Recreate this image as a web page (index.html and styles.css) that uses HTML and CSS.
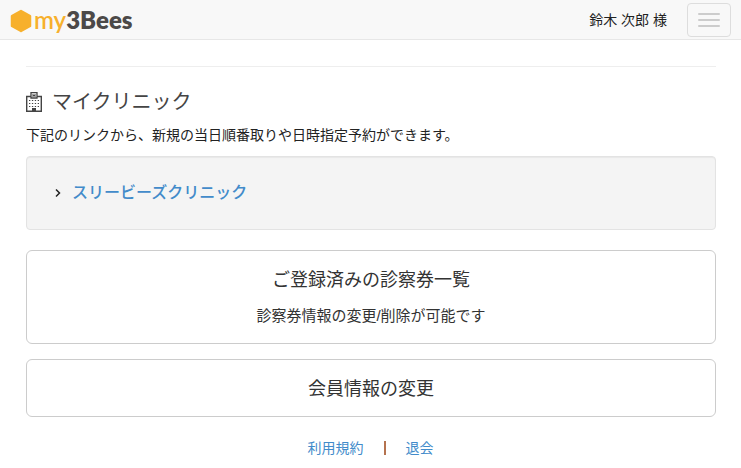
FILE: index.html
```html
<!DOCTYPE html>
<html lang="ja">
<head>
<meta charset="utf-8">
<meta name="viewport" content="width=device-width, initial-scale=1">
<title>my3Bees</title>
<link rel="stylesheet" href="styles.css">
</head>
<body>
<header class="navbar">
  <a class="brand" href="#">
    <svg class="brand-mark" viewBox="0 0 22 24" aria-hidden="true"><path d="M11 2 20 7V17L11 22 2 17V7Z" fill="#f7b02c" stroke="#f7b02c" stroke-width="2.5" stroke-linejoin="round"/></svg>
    <span class="brand-my">my</span><span class="brand-bees">3Bees</span>
  </a>
  <div class="account">
    <span>鈴木 次郎 様</span>
    <button class="menu-toggle" type="button" aria-label="メニュー">
      <span class="bar"></span><span class="bar"></span><span class="bar"></span>
    </button>
  </div>
</header>
<main class="content">
  <section class="clinics">
    <h1 class="heading">
      <svg class="hospital" viewBox="0 0 16 20" aria-hidden="true">
        <path d="M5 4.500H.7V19.300H15.300V4.500H11" fill="none" stroke="#444" stroke-width="1.4"/>
        <path d="M5 .7H11V6H5Z" fill="#fff" stroke="#444" stroke-width="1.3"/>
        <path d="M7 2V5M9 2V5M7 3.500H9" stroke="#444" fill="none"/>
        <path d="M3 8.500H13M3 11.500H13M3 14.500H13" stroke="#444" stroke-width="1.200" stroke-dasharray="1.300 1.600"/>
        <path d="M6 16H10V19H6Z" fill="#444"/>
      </svg>
      マイクリニック
    </h1>
    <p class="lead">下記のリンクから、新規の当日順番取りや日時指定予約ができます。</p>
    <ul class="well">
      <li class="clinic">
        <svg class="chevron" viewBox="0 0 6 10" aria-hidden="true"><path d="M1 1.500 4.500 5 1 8.500" fill="none" stroke="#222" stroke-width="1.500"/></svg>
        <a class="clinic-link" href="#">スリービーズクリニック</a>
      </li>
    </ul>
  </section>
  <nav class="cards">
    <a class="card" href="#">
      <span class="card-title">ご登録済みの診察券一覧</span>
      <span class="card-note">診察券情報の変更/削除が可能です</span>
    </a>
    <a class="card" href="#">
      <span class="card-title">会員情報の変更</span>
    </a>
  </nav>
</main>
<footer class="footer">
  <a href="#">利用規約</a>
  <span class="divider"></span>
  <a href="#">退会</a>
</footer>
</body>
</html>
```
FILE: styles.css
```css
* {
  box-sizing: border-box;
}

body {
  margin: 0;
  background: #fff;
  color: #222;
  font: 14px/20px "Liberation Sans", "Noto Sans CJK JP", sans-serif;
}

a {
  color: #428bca;
  text-decoration: none;
}

.navbar {
  display: flex;
  align-items: center;
  justify-content: space-between;
  height: 40px;
  padding: 0 10px;
  background: #f8f8f8;
  border-bottom: 1px solid #e7e7e7;
}

.brand {
  display: flex;
  align-items: center;
  font: 600 24px/32px Lato, sans-serif;
}

.brand-mark {
  width: 22px;
  height: 24px;
  margin: 3px 2px 0 0;
}

.brand-my {
  color: #f7b02c;
}

.brand-bees {
  color: #4c4948;
  font-weight: 800;
}

.account {
  display: flex;
  align-items: center;
  gap: 20px;
}

.menu-toggle {
  display: flex;
  flex-direction: column;
  align-items: center;
  justify-content: center;
  gap: 4px;
  width: 44px;
  height: 34px;
  padding: 0;
  background: transparent;
  border: 1px solid #ddd;
  border-radius: 4px;
}

.bar {
  width: 22px;
  height: 2px;
  background: #ccc;
  border-radius: 1px;
}

.content {
  margin: 26px 25px 0 26px;
  border-top: 1px solid #eee;
}

.heading {
  display: flex;
  align-items: center;
  gap: 10px;
  margin: 20px 0 8px;
  color: #444;
  font-size: 20px;
  font-weight: 400;
  line-height: 30px;
}

.hospital {
  width: 16px;
  height: 20px;
}

.lead {
  margin: 0 0 11px;
}

.well {
  margin: 0 0 20px;
  padding: 24px 28px;
  list-style: none;
  background: #f4f4f4;
  border: 1px solid #e3e3e3;
  border-radius: 4px;
  box-shadow: inset 0 1px 1px rgba(0, 0, 0, 0.05);
}

.clinic {
  display: flex;
  align-items: center;
  gap: 11px;
}

.chevron {
  width: 6px;
  height: 10px;
}

.clinic-link {
  font-size: 16px;
  font-weight: 500;
  line-height: 24px;
}

.cards {
  display: grid;
  gap: 15px;
}

.card {
  display: grid;
  gap: 12px;
  padding: 17px 16px 15px;
  color: #333;
  text-align: center;
  border: 1px solid #ccc;
  border-radius: 6px;
}

.card-title {
  font-size: 18px;
  line-height: 24px;
}

.card-note {
  font-size: 15px;
  line-height: 24px;
}

.footer {
  display: flex;
  align-items: center;
  justify-content: center;
  gap: 20px;
  padding: 21px 0 9px;
}

.divider {
  width: 2px;
  height: 14px;
  background: #b5734f;
}
```
